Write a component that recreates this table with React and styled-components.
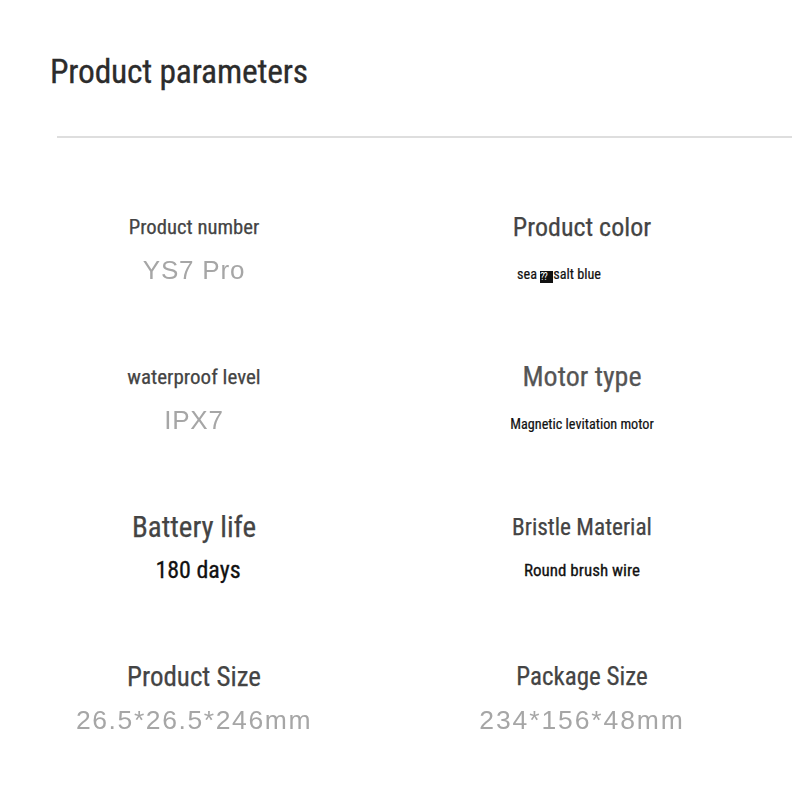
import styled, { createGlobalStyle } from "styled-components";

const GlobalStyle = createGlobalStyle`
  body {
    margin: 0;
    background: #ffffff;
    font-family: "Roboto Condensed", Roboto, "DejaVu Sans Condensed", sans-serif;
  }
`;

const params = [
  { label: "Product number", labelSize: 20.7, value: "YS7 Pro", kind: "gray" },
  { label: "Product color", labelSize: 26, value: "sea", kind: "tiny", color: true, shift: -23 },
  { label: "waterproof level", labelSize: 21, value: "IPX7", kind: "gray" },
  { label: "Motor type", labelSize: 28, labelColor: "#555", value: "Magnetic levitation motor", kind: "tiny" },
  { label: "Battery life", labelSize: 29, value: "180 days", kind: "dark", valueSize: 24, shift: 4 },
  { label: "Bristle Material", labelSize: 23.3, value: "Round brush wire", kind: "dark", valueSize: 17 },
  { label: "Product Size", labelSize: 27, value: "26.5*26.5*246mm", kind: "gray", spacing: 1.6, valueSize: 26.5 },
  { label: "Package Size", labelSize: 25, value: "234*156*48mm", kind: "gray", spacing: 1.9, valueSize: 26.5 },
];

const App = () => {
  return (
    <>
      <GlobalStyle />
      <Page>
        <Header>
          <Title>Product parameters</Title>
        </Header>
        <Divider />
        <ParamGrid>
          {params.map((item) => (
            <Cell key={item.label}>
              <Label size={item.labelSize} color={item.labelColor}>{item.label}</Label>
              {item.kind === "gray" && (
                <GrayValue size={item.valueSize} spacing={item.spacing}>{item.value}</GrayValue>
              )}
              {item.kind === "tiny" && (
                <TinyValue shift={item.shift}>
                  {item.color ? <>sea <Glitch>??</Glitch>salt blue</> : item.value}
                </TinyValue>
              )}
              {item.kind === "dark" && (
                <DarkValue size={item.valueSize} shift={item.shift}>{item.value}</DarkValue>
              )}
            </Cell>
          ))}
        </ParamGrid>
      </Page>
    </>
  );
};

// main container
const Page = styled.div`
  width: 800px;
  height: 800px;
  overflow: hidden;
  background: #ffffff;
`;

// header
const Header = styled.div`
  padding: 50px 0 0 50px;
`;

const Title = styled.h1`
  margin: 0;
  font-size: 33.5px;
  line-height: 44px;
  font-weight: 400;
  letter-spacing: -0.2px;
  color: #2c2c2c;
  -webkit-text-stroke: 0.3px #2c2c2c;
`;

const Divider = styled.div`
  margin: 42px 8px 0 57px;
  height: 2px;
  background: #dedede;
`;

// grid
const ParamGrid = styled.div`
  display: grid;
  grid-template-columns: 388px 388px;
  grid-auto-rows: 150px;
  margin-top: 54px;
`;

const Cell = styled.div`
  display: flex;
  flex-direction: column;
  align-items: center;
  padding-top: 18px;
`;

// text
const Label = styled.div`
  font-size: ${(props) => props.size}px;
  line-height: 34px;
  height: 34px;
  color: ${(props) => props.color || "#444"};
  -webkit-text-stroke: 0.25px ${(props) => props.color || "#444"};
  white-space: nowrap;
`;

const GrayValue = styled.div`
  margin-top: 11px;
  font-family: "Liberation Sans", Arial, sans-serif;
  font-size: ${(props) => props.size || 26}px;
  line-height: 30px;
  letter-spacing: ${(props) => props.spacing || 0.8}px;
  color: #a6a6a6;
  filter: blur(0.4px);
  white-space: nowrap;
`;

const TinyValue = styled.div`
  margin-top: 15px;
  transform: translateX(${(props) => props.shift || 0}px);
  font-size: 14.2px;
  line-height: 30px;
  color: #111;
  -webkit-text-stroke: 0.2px #111;
  white-space: nowrap;
`;

const DarkValue = styled.div`
  margin-top: 11px;
  transform: translateX(${(props) => props.shift || 0}px);
  font-size: ${(props) => props.size}px;
  line-height: 30px;
  color: #111;
  -webkit-text-stroke: 0.3px #111;
  white-space: nowrap;
`;

const Glitch = styled.span`
  display: inline-block;
  width: 13px;
  background: #111;
  color: #fff;
  font-size: 10px;
  line-height: 12px;
  letter-spacing: -1px;
  text-align: left;
  vertical-align: -1px;
  -webkit-text-stroke: 0;
`;

export default App;
